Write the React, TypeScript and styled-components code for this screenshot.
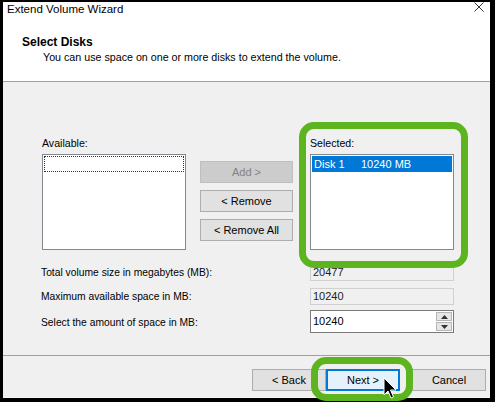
import React from "react";
import styled, { createGlobalStyle } from "styled-components";

const Global = createGlobalStyle`
  html, body { margin: 0; padding: 0; background: #000; }
  body { font-family: "Liberation Sans", Arial, sans-serif; color: #000; }
`;

const Page = styled.div`
  position: relative;
  width: 495px;
  height: 402px;
  background: #000;
  overflow: hidden;
`;

const Window = styled.div`
  position: absolute;
  left: 3px;
  top: 2px;
  width: 487px;
  height: 396px;
  display: flex;
  flex-direction: column;
  background: #f0f0f0;
`;

const TitleBar = styled.div`
  height: 14px;
  flex: none;
  display: flex;
  align-items: center;
  justify-content: space-between;
  padding: 0 4px 0 4px;
  background: #fff;
  font-size: 11.5px;
  line-height: 14px;
`;

const CloseIcon = styled.svg`
  width: 10px;
  height: 10px;
  margin-right: 2px;
  margin-top: -4px;
`;

const Header = styled.div`
  height: 66px;
  flex: none;
  box-sizing: border-box;
  padding: 19px 0 0 19px;
  background: #fff;
  border-bottom: 1px solid #a0a0a0;
`;

const HeaderTitle = styled.div`
  font-weight: bold;
  font-size: 12px;
  line-height: 14px;
`;

const HeaderSub = styled.div`
  margin: 1px 0 0 21px;
  font-size: 10.7px;
  line-height: 14px;
`;

const Body = styled.div`
  flex: 1;
  padding: 54px 0 0 39px;
  display: flex;
  flex-direction: column;
`;

const ListRow = styled.div`
  display: flex;
  align-items: flex-start;
`;

const ListColumn = styled.div<{ $ml?: number }>`
  display: flex;
  flex-direction: column;
  width: 144px;
  margin-left: ${(p) => p.$ml ?? 0}px;
`;

const Label = styled.div`
  font-size: 10.6px;
  line-height: 14px;
  height: 14px;
  margin-bottom: 4px;
  white-space: nowrap;
`;

const ListBox = styled.div`
  box-sizing: border-box;
  height: 96px;
  background: #fff;
  border: 1px solid #828790;
  padding: 1px;
`;

const FocusRow = styled.div`
  height: 16px;
  box-sizing: border-box;
  border: 1px dotted #333;
`;

const SelectedRow = styled.div`
  height: 16px;
  display: flex;
  align-items: center;
  background: #0078d7;
  color: #fff;
  font-size: 11px;
  padding-left: 2px;
`;

const Cell = styled.span<{ $w?: number }>`
  display: inline-block;
  width: ${(p) => (p.$w ? `${p.$w}px` : "auto")};
`;

const ButtonColumn = styled.div`
  display: flex;
  flex-direction: column;
  gap: 7px;
  margin-left: 14px;
  padding-top: 25px;
  width: 93px;
`;

const WinButton = styled.div<{ $disabled?: boolean; $default?: boolean; $w?: number }>`
  box-sizing: border-box;
  height: 22px;
  width: ${(p) => (p.$w ? `${p.$w}px` : "100%")};
  display: flex;
  align-items: center;
  justify-content: center;
  font-size: 11px;
  background: ${(p) => (p.$disabled ? "#cccccc" : p.$default ? "#e5f1fb" : "#e1e1e1")};
  border: ${(p) => (p.$default ? "2px solid #0078d7" : `1px solid ${p.$disabled ? "#bfbfbf" : "#adadad"}`)};
  color: ${(p) => (p.$disabled ? "#838383" : "#000")};
`;

const FieldGrid = styled.div`
  display: grid;
  grid-template-columns: 269px 144px;
  margin: 14px 0 0 -1px;
  row-gap: 7px;
  align-items: center;
`;

const FieldLabel = styled.div`
  font-size: 10.3px;
  line-height: 14px;
  white-space: nowrap;
`;

const ReadOnlyField = styled.div`
  box-sizing: border-box;
  height: 17px;
  border: 1px solid #d0d0d0;
  background: #f0f0f0;
  font-size: 11px;
  line-height: 15px;
  padding-left: 2px;
  color: #222;
`;

const SpinBox = styled.div`
  box-sizing: border-box;
  height: 23px;
  margin-top: -2px;
  display: flex;
  border: 1px solid #7a7a7a;
  background: #fff;
`;

const SpinText = styled.div`
  flex: 1;
  font-size: 11px;
  line-height: 21px;
  padding-left: 2px;
`;

const SpinButtons = styled.div`
  width: 16px;
  display: flex;
  flex-direction: column;
  gap: 1px;
  padding: 1px;
`;

const SpinBtn = styled.div`
  flex: 1;
  background: #e6e6e6;
  border: 1px solid #b5b5b5;
  display: flex;
  align-items: center;
  justify-content: center;
`;

const Footer = styled.div`
  height: 43px;
  flex: none;
  box-sizing: border-box;
  border-top: 1px solid #a0a0a0;
  border-bottom: 1px solid #f8f8f8;
  display: flex;
  align-items: flex-start;
  padding: 13px 0 0 249px;
`;

const Highlight = styled.div<{ $l: number; $t: number; $w: number; $h: number }>`
  position: absolute;
  left: ${(p) => p.$l}px;
  top: ${(p) => p.$t}px;
  width: ${(p) => p.$w}px;
  height: ${(p) => p.$h}px;
  box-sizing: border-box;
  border: 7px solid #5cb41e;
  border-radius: 15px;
  pointer-events: none;
`;

const Cursor = styled.svg`
  position: absolute;
  left: 383px;
  top: 377px;
  width: 14px;
  height: 23px;
`;

const Tri = ({ up }: { up?: boolean }) => (
  <svg width="7" height="4" viewBox="0 0 7 4">
    <path d={up ? "M0 4 L3.5 0 L7 4 Z" : "M0 0 L3.5 4 L7 0 Z"} fill="#333" />
  </svg>
);

export default function App() {
  return (
    <Page>
      <Global />
      <Window>
        <TitleBar>
          <span>Extend Volume Wizard</span>
          <CloseIcon viewBox="0 0 10 10">
            <path d="M0.5 0.5 L9.5 9.5 M9.5 0.5 L0.5 9.5" stroke="#333" strokeWidth="1" />
          </CloseIcon>
        </TitleBar>
        <Header>
          <HeaderTitle>Select Disks</HeaderTitle>
          <HeaderSub>You can use space on one or more disks to extend the volume.</HeaderSub>
        </Header>
        <Body>
          <ListRow>
            <ListColumn>
              <Label>Available:</Label>
              <ListBox>
                <FocusRow />
              </ListBox>
            </ListColumn>
            <ButtonColumn>
              <WinButton $disabled>Add &gt;</WinButton>
              <WinButton>&lt; Remove</WinButton>
              <WinButton>&lt; Remove All</WinButton>
            </ButtonColumn>
            <ListColumn $ml={17}>
              <Label>Selected:</Label>
              <ListBox>
                <SelectedRow>
                  <Cell $w={47}>Disk 1</Cell>
                  <Cell>10240 MB</Cell>
                </SelectedRow>
              </ListBox>
            </ListColumn>
          </ListRow>
          <FieldGrid>
            <FieldLabel>Total volume size in megabytes (MB):</FieldLabel>
            <ReadOnlyField>20477</ReadOnlyField>
            <FieldLabel>Maximum available space in MB:</FieldLabel>
            <ReadOnlyField>10240</ReadOnlyField>
            <FieldLabel>Select the amount of space in MB:</FieldLabel>
            <SpinBox>
              <SpinText>10240</SpinText>
              <SpinButtons>
                <SpinBtn>
                  <Tri up />
                </SpinBtn>
                <SpinBtn>
                  <Tri />
                </SpinBtn>
              </SpinButtons>
            </SpinBox>
          </FieldGrid>
        </Body>
        <Footer>
          <WinButton $w={74}>&lt; Back</WinButton>
          <WinButton $w={74} $default>Next &gt;</WinButton>
          <WinButton $w={74} style={{ marginLeft: 12 }}>Cancel</WinButton>
        </Footer>
      </Window>
      <Highlight $l={299} $t={122} $w={169} $h={146} />
      <Highlight $l={311} $t={357} $w={102} $h={44} />
      <Cursor viewBox="0 0 14 23">
        <path
          d="M1 1 L1 18 L5 14 L8 21 L10.5 20 L7.5 13 L13 13 Z"
          fill="#000"
          stroke="#fff"
          strokeWidth="1"
          strokeLinejoin="round"
        />
      </Cursor>
    </Page>
  );
}
